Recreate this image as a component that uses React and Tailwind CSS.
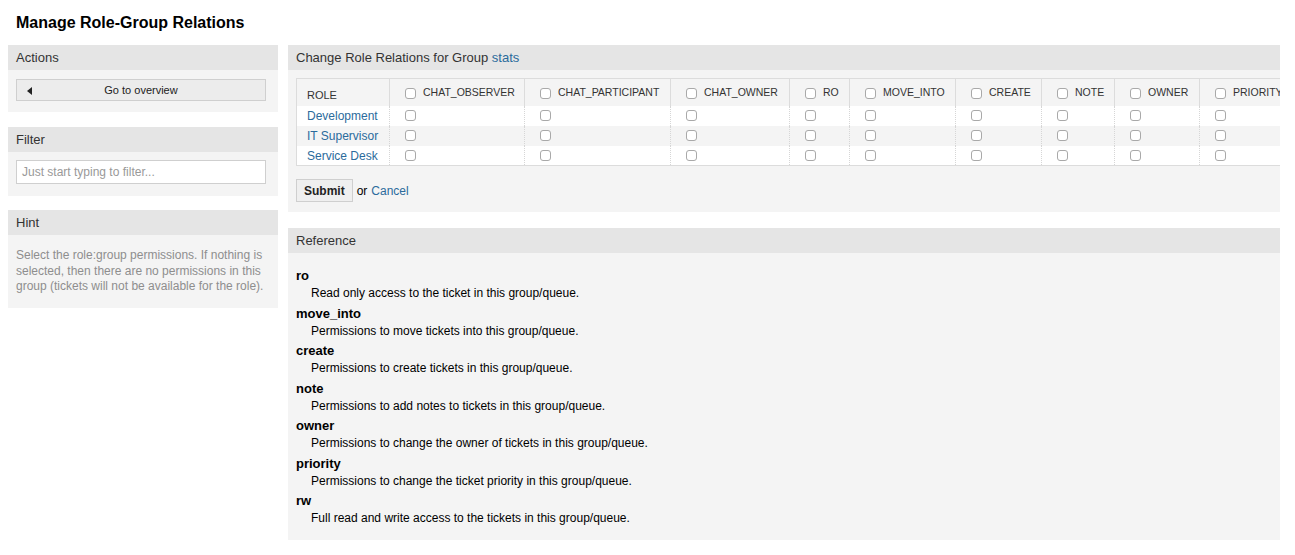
import React from "react";

const cols = [
  { name: "CHAT_OBSERVER", w: 135 },
  { name: "CHAT_PARTICIPANT", w: 146 },
  { name: "CHAT_OWNER", w: 119 },
  { name: "RO", w: 60 },
  { name: "MOVE_INTO", w: 106 },
  { name: "CREATE", w: 86 },
  { name: "NOTE", w: 73 },
  { name: "OWNER", w: 85 },
  { name: "PRIORITY", w: 95 },
  { name: "RW", w: 70 },
];

const roles = ["Development", "IT Supervisor", "Service Desk"];

const refs = [
  ["ro", "Read only access to the ticket in this group/queue."],
  ["move_into", "Permissions to move tickets into this group/queue."],
  ["create", "Permissions to create tickets in this group/queue."],
  ["note", "Permissions to add notes to tickets in this group/queue."],
  ["owner", "Permissions to change the owner of tickets in this group/queue."],
  ["priority", "Permissions to change the ticket priority in this group/queue."],
  ["rw", "Full read and write access to the tickets in this group/queue."],
];

function Box() {
  return (
    <span className="inline-block w-[11px] h-[11px] border border-[#a9a9a9] rounded-[3px] bg-white shrink-0" />
  );
}

function PanelHeader({ children }) {
  return (
    <div className="h-[25px] bg-[#e5e5e5] px-2 flex items-center text-[13px] text-[#333]">
      {children}
    </div>
  );
}

export default function App() {
  return (
    <div
      className="w-[1295px] h-[555px] bg-white overflow-hidden text-black"
      style={{ fontFamily: '"Liberation Sans", Arial, sans-serif' }}
    >
      <h1 className="text-[16px] font-bold leading-[20px] pl-4 pt-[13px] h-[45px]">
        Manage Role-Group Relations
      </h1>
      <div className="flex pl-2 gap-[10px]">
        {/* Sidebar */}
        <div className="w-[270px] shrink-0 flex flex-col gap-[15px]">
          <div>
            <PanelHeader>Actions</PanelHeader>
            <div className="bg-[#f4f4f4] pl-2 pr-3 pt-[9px] pb-[11px]">
              <div className="relative h-[22px] border border-[#cfcfcf] bg-[#ececec] flex items-center justify-center text-[11px] text-[#222]">
                <span className="absolute left-[10px] top-[7px] w-0 h-0 border-y-[4px] border-y-transparent border-r-[5px] border-r-[#222]" />
                Go to overview
              </div>
            </div>
          </div>
          <div>
            <PanelHeader>Filter</PanelHeader>
            <div className="bg-[#f4f4f4] pl-2 pr-3 pt-[8px] pb-[12px]">
              <div className="h-[24px] border border-[#cfcfcf] bg-white flex items-center px-[5px] text-[12px] text-[#999]">
                Just start typing to filter...
              </div>
            </div>
          </div>
          <div className="-mt-[1px]">
            <PanelHeader>Hint</PanelHeader>
            <div className="bg-[#f4f4f4] px-2 pt-[13px] pb-[13px] text-[12px] leading-[15.5px] text-[#8e8e8e]">
              Select the role:group permissions. If nothing is selected, then there are no permissions in this group (tickets will not be available for the role).
            </div>
          </div>
        </div>

        {/* Main */}
        <div className="w-[992px] shrink-0 flex flex-col gap-[16px]">
          <div className="overflow-hidden">
            <PanelHeader>
              <span>
                Change Role Relations for Group <span className="text-[#2b6b9c]">stats</span>
              </span>
            </PanelHeader>
            <div className="bg-[#f4f4f4] pl-2 pt-[8px] pb-[10px]">
              <table className="table-fixed border-collapse border border-[#dcdcdc] bg-white" style={{ width: 93 + cols.reduce((a, c) => a + c.w, 0) }}>
                <colgroup>
                  <col style={{ width: 93 }} />
                  {cols.map((c) => (
                    <col key={c.name} style={{ width: c.w }} />
                  ))}
                </colgroup>
                <thead>
                  <tr className="h-[27px] bg-[#f4f4f4]">
                    <th className="text-left align-bottom pb-[2px] pl-[10px] text-[11px] font-normal text-[#333]">
                      ROLE
                    </th>
                    {cols.map((c) => (
                      <th key={c.name} className="border-l border-[#dcdcdc] text-left font-normal pl-[15px] pt-[2px] align-middle">
                        <div className="flex items-center gap-[7px] text-[10.5px] text-[#333] whitespace-nowrap">
                          <Box />
                          {c.name}
                        </div>
                      </th>
                    ))}
                  </tr>
                </thead>
                <tbody>
                  {roles.map((r, i) => (
                    <tr key={r} className={"h-[20px] " + (i === 1 ? "bg-[#f4f4f4]" : "bg-white")}>
                      <td className="pl-[10px] pt-[1px] text-[12px] text-[#2b6b9c] whitespace-nowrap">{r}</td>
                      {cols.map((c) => (
                        <td key={c.name} className="border-l border-dotted border-[#d6d6d6] pl-[15px] align-middle">
                          <div className="flex items-center">
                            <Box />
                          </div>
                        </td>
                      ))}
                    </tr>
                  ))}
                </tbody>
              </table>
              <div className="flex items-center mt-[13px] text-[12px]">
                <div className="h-[23px] px-[7px] border border-[#cfcfcf] bg-[#efefef] flex items-center font-bold text-[#222]">
                  Submit
                </div>
                <span className="ml-[4px]">or</span>
                <span className="ml-[4px] text-[#2b6b9c]">Cancel</span>
              </div>
            </div>
          </div>

          <div>
            <PanelHeader>Reference</PanelHeader>
            <div className="bg-[#f4f4f4] px-2 pt-[14px] pb-[10px]">
              {refs.map(([k, v]) => (
                <div key={k} className="mb-[3px]">
                  <div className="text-[13px] font-bold leading-[18px]">{k}</div>
                  <div className="text-[12px] leading-[16.5px] pl-[15px]">{v}</div>
                </div>
              ))}
            </div>
          </div>
        </div>
      </div>
    </div>
  );
}
